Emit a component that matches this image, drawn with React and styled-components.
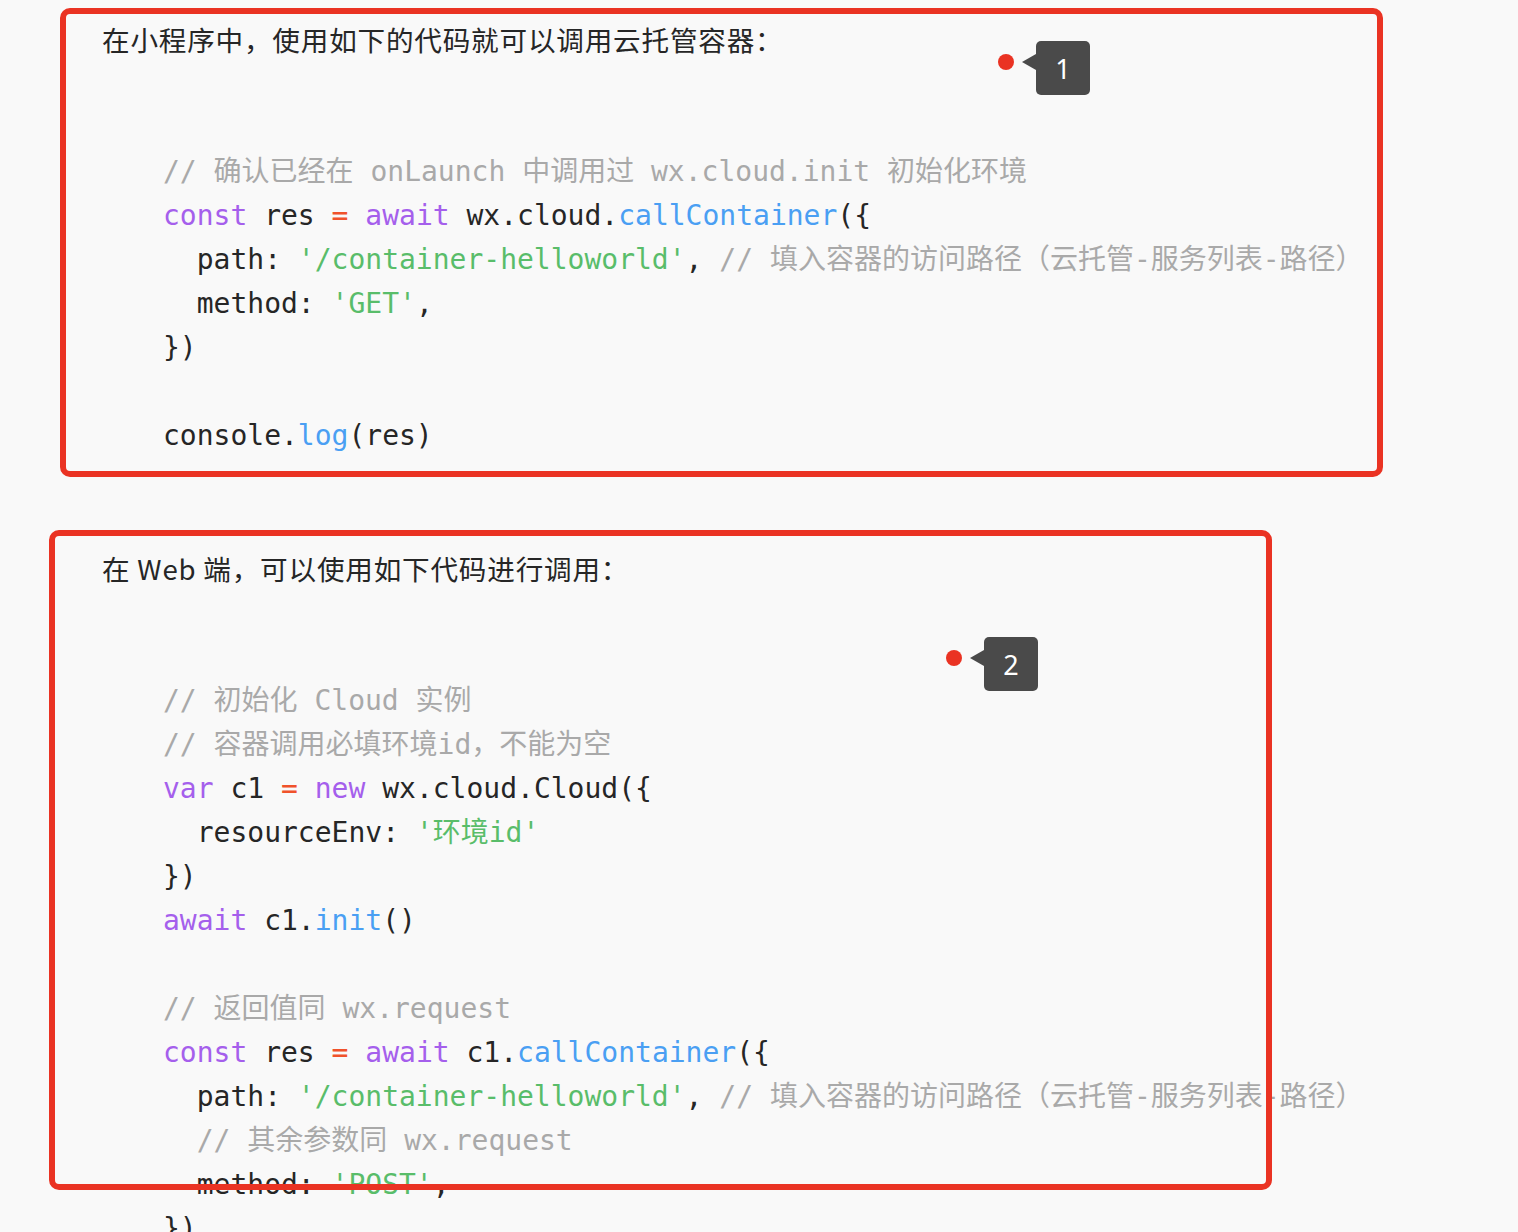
import React from "react";
import styled, { createGlobalStyle } from "styled-components";

const Global = createGlobalStyle`
  html, body { margin: 0; padding: 0; background: #f9f9f9; }
  body { font-family: "Noto Sans CJK SC", "Noto Sans", sans-serif; }
`;

const Page = styled.div`
  position: relative;
  min-height: 1232px;
  padding: 17px 0 0 102px;
  box-sizing: border-box;
  display: flex;
  flex-direction: column;
  gap: 88px;
  overflow: hidden;
`;

const Para = styled.p`
  margin: 0;
  font-family: "Noto Sans CJK SC", "Noto Sans", sans-serif;
  font-size: 27.6px;
  letter-spacing: 0.8px;
  line-height: 44px;
  color: #262626;
`;

const Code = styled.pre`
  margin: 0 0 0 61px;
  padding-top: 1px;
  font-family: "DejaVu Sans Mono", "Noto Sans CJK SC", monospace;
  font-size: 28px;
  line-height: 44px;
  color: #262626;
  white-space: pre;
`;

const colors = {
  kw: "#a55fec",
  op: "#f0522b",
  fn: "#4a9ff3",
  str: "#59bd6a",
  cm: "#a9a9a9",
  tx: "#262626",
};

const Tok = styled.span`
  color: ${(p) => colors[p.$k]};
`;

const Line = styled.div`
  height: 44px;
`;

const Frame = styled.div`
  position: absolute;
  left: ${(p) => p.$x}px;
  top: ${(p) => p.$y}px;
  width: ${(p) => p.$w}px;
  height: ${(p) => p.$h}px;
  box-sizing: border-box;
  border: 6px solid #ea3323;
  border-radius: 10px;
  pointer-events: none;
`;

const Marker = styled.div`
  position: absolute;
  left: ${(p) => p.$x}px;
  top: ${(p) => p.$y}px;
  display: flex;
  align-items: flex-start;
`;

const Dot = styled.span`
  width: 16px;
  height: 16px;
  border-radius: 50%;
  background: #ea3323;
  margin-top: 13px;
`;

const Tag = styled.span`
  position: relative;
  margin-left: 22px;
  width: 54px;
  height: 54px;
  border-radius: 5px;
  background: #4a4a4a;
  color: #ffffff;
  font-family: "Noto Sans", "Open Sans", sans-serif;
  font-size: 27px;
  display: flex;
  align-items: center;
  justify-content: center;
  box-sizing: border-box;
  &::before {
    content: "";
    position: absolute;
    left: -14px;
    top: 13px;
    border-style: solid;
    border-width: 8px 14px 8px 0;
    border-color: transparent #4a4a4a transparent transparent;
  }
`;

const block1 = [
  [["cm", "// 确认已经在 onLaunch 中调用过 wx.cloud.init 初始化环境"]],
  [["kw", "const"], ["tx", " res "], ["op", "="], ["tx", " "], ["kw", "await"], ["tx", " wx.cloud."], ["fn", "callContainer"], ["tx", "({"]],
  [["tx", "  path: "], ["str", "'/container-helloworld'"], ["tx", ", "], ["cm", "// 填入容器的访问路径（云托管-服务列表-路径）"]],
  [["tx", "  method: "], ["str", "'GET'"], ["tx", ","]],
  [["tx", "})"]],
  [],
  [["tx", "console."], ["fn", "log"], ["tx", "(res)"]],
];

const block2 = [
  [["cm", "// 初始化 Cloud 实例"]],
  [["cm", "// 容器调用必填环境id，不能为空"]],
  [["kw", "var"], ["tx", " c1 "], ["op", "="], ["tx", " "], ["kw", "new"], ["tx", " wx.cloud.Cloud({"]],
  [["tx", "  resourceEnv: "], ["str", "'环境id'"]],
  [["tx", "})"]],
  [["kw", "await"], ["tx", " c1."], ["fn", "init"], ["tx", "()"]],
  [],
  [["cm", "// 返回值同 wx.request"]],
  [["kw", "const"], ["tx", " res "], ["op", "="], ["tx", " "], ["kw", "await"], ["tx", " c1."], ["fn", "callContainer"], ["tx", "({"]],
  [["tx", "  path: "], ["str", "'/container-helloworld'"], ["tx", ", "], ["cm", "// 填入容器的访问路径（云托管-服务列表-路径）"]],
  [["tx", "  "], ["cm", "// 其余参数同 wx.request"]],
  [["tx", "  method: "], ["str", "'POST'"], ["tx", ","]],
  [["tx", "})"]],
];

function CodeBlock({ lines }) {
  return (
    <Code>
      {lines.map((toks, i) => (
        <Line key={i}>
          {toks.map(([k, t], j) => (
            <Tok key={j} $k={k}>
              {t}
            </Tok>
          ))}
        </Line>
      ))}
    </Code>
  );
}

export default function App() {
  return (
    <>
      <Global />
      <Page>
        <Para>在小程序中，使用如下的代码就可以调用云托管容器：</Para>
        <CodeBlock lines={block1} />
        <Para>在 Web 端，可以使用如下代码进行调用：</Para>
        <CodeBlock lines={block2} />

        <Frame $x={60} $y={8} $w={1323} $h={469} />
        <Frame $x={49} $y={530} $w={1223} $h={660} />
        <Marker $x={998} $y={41}>
          <Dot />
          <Tag>1</Tag>
        </Marker>
        <Marker $x={946} $y={637}>
          <Dot />
          <Tag>2</Tag>
        </Marker>
      </Page>
    </>
  );
}
